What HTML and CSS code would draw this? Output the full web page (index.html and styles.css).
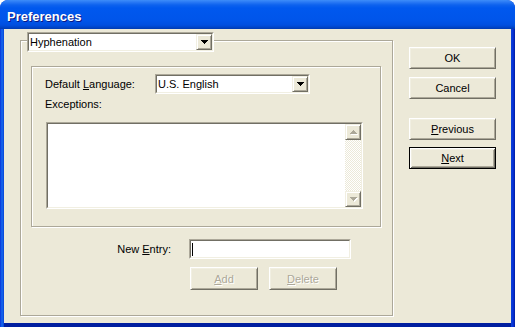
FILE: index.html
```html
<!DOCTYPE html>
<html lang="en">
<head>
  <meta charset="UTF-8">
  <title>Preferences</title>
  <link rel="stylesheet" href="styles.css">
</head>
<body>
  <div class="window">
    <div class="titlebar">Preferences</div>
    <div class="client">
      <div class="group">
        <div class="sunken combo combo-head">
          <div class="well">
            <span class="combo-text">Hyphenation</span>
            <span class="drop">
              <svg width="7" height="4" viewBox="0 0 7 4"><path d="M0 0h7v1H0zM1 1h5v1H1zM2 2h3v1H2zM3 3h1v1H3z" fill="#000"/></svg>
            </span>
          </div>
        </div>

        <div class="panel">
          <div class="lang-row">
            <label class="lang-label">Default <u>L</u>anguage:</label>
            <div class="sunken combo combo-lang">
              <div class="well">
                <span class="combo-text">U.S. English</span>
                <span class="drop">
                  <svg width="7" height="4" viewBox="0 0 7 4"><path d="M0 0h7v1H0zM1 1h5v1H1zM2 2h3v1H2zM3 3h1v1H3z" fill="#000"/></svg>
                </span>
              </div>
            </div>
          </div>
          <div class="exc-label">Exceptions:</div>
          <div class="sunken listbox">
            <div class="well">
              <div class="list-body"></div>
              <div class="scrollbar">
                <span class="sbtn">
                  <svg width="8" height="5" viewBox="0 0 8 5"><path d="M4 1h1v1H4zM3 2h3v1H3zM2 3h5v1H2zM1 4h7v1H1z" fill="#fff"/><path d="M3 0h1v1H3zM2 1h3v1H2zM1 2h5v1H1zM0 3h7v1H0z" fill="#ACA899"/></svg>
                </span>
                <span class="track"></span>
                <span class="sbtn">
                  <svg width="8" height="5" viewBox="0 0 8 5"><path d="M1 1h7v1H1zM2 2h5v1H2zM3 3h3v1H3zM4 4h1v1H4z" fill="#fff"/><path d="M0 0h7v1H0zM1 1h5v1H1zM2 2h3v1H2zM3 3h1v1H3z" fill="#ACA899"/></svg>
                </span>
              </div>
            </div>
          </div>
        </div>

        <div class="entry-row">
          <label class="entry-label">New <u>E</u>ntry:</label>
          <div class="sunken textbox">
            <div class="well"><span class="caret"></span></div>
          </div>
        </div>
        <div class="entry-buttons">
          <button class="btn small" disabled><u>A</u>dd</button>
          <button class="btn small" disabled><u>D</u>elete</button>
        </div>
      </div>

      <div class="side">
        <button class="btn">OK</button>
        <button class="btn">Cancel</button>
        <button class="btn gap-top"><u>P</u>revious</button>
        <button class="btn default"><u>N</u>ext</button>
      </div>
    </div>
  </div>
</body>
</html>
```

FILE: styles.css
```css
body {
  margin: 0;
  background: #fff;
  font-family: "Liberation Sans", Arial, sans-serif;
  font-size: 11px;
  color: #000;
}
.window {
  width: 515px;
  height: 327px;
  display: flex;
  flex-direction: column;
  background: linear-gradient(to right, #0831D9 0, #166AEE 2px, #0842D6 4px, #0842D6 511px, #0831D9 513px, #001EA0 515px);
  border-radius: 8px 8px 0 0;
  overflow: hidden;
}
.titlebar {
  height: 29px;
  box-sizing: border-box;
  flex: none;
  padding: 7px 0 0 7px;
  line-height: 20px;
  font-size: 13px;
  font-weight: bold;
  color: #fff;
  text-shadow: 1px 1px #0A1883;
  background: linear-gradient(to bottom, #3D8DF9 0, #2A7AF5 2px, #0D62EE 5px, #0058EE 8px, #0055EA 20px, #004FE0 25px, #0046CC 27px, #003BB0 29px);
}
.client {
  flex: 1;
  display: flex;
  margin: 0 4px 4px;
  padding: 11px 0 0 16px;
  background: #ECE9D8;
  box-shadow: 0 4px #001EA0;
}

/* etched frames */
.group {
  width: 373px;
  height: 276px;
  box-sizing: border-box;
  border: 1px solid #ACA899;
  box-shadow: inset 1px 1px #fff, 1px 1px #fff;
}
.panel {
  width: 350px;
  height: 161px;
  box-sizing: border-box;
  margin: 14px 0 0 10px;
  padding: 7px 0 0 13px;
  border: 1px solid #ACA899;
  box-shadow: inset 1px 1px #fff, 1px 1px #fff;
}

/* sunken 3d boxes */
.sunken {
  box-sizing: border-box;
  border: 1px solid;
  border-color: #ACA899 #fff #fff #ACA899;
}
.sunken > .well {
  height: 100%;
  box-sizing: border-box;
  border: 1px solid;
  border-color: #716F64 #F1EFE2 #F1EFE2 #716F64;
  background: #fff;
}

.combo .well {
  display: flex;
  align-items: center;
}
.combo-text {
  flex: 1;
  padding-left: 1px;
  line-height: 13px;
}
.drop {
  width: 16px;
  height: 16px;
  box-sizing: border-box;
  display: flex;
  align-items: center;
  justify-content: center;
  background: #ECE9D8;
  border: 1px solid;
  border-color: #F1EFE2 #716F64 #716F64 #F1EFE2;
  box-shadow: inset 1px 1px #fff, inset -1px -1px #ACA899;
}
.combo-head {
  width: 187px;
  height: 20px;
  margin: -9px 0 0 6px;
}
.combo-lang {
  width: 155px;
  height: 20px;
}

.lang-row {
  display: flex;
  align-items: center;
}
.lang-label {
  width: 110px;
  line-height: 13px;
}
.exc-label {
  margin-top: 4px;
  line-height: 13px;
}

.listbox {
  width: 317px;
  height: 87px;
  margin: 11px 0 0 1px;
}
.listbox .well {
  display: flex;
}
.list-body {
  flex: 1;
}
.scrollbar {
  width: 16px;
  display: flex;
  flex-direction: column;
}
.sbtn {
  width: 16px;
  height: 16px;
  box-sizing: border-box;
  display: flex;
  align-items: center;
  justify-content: center;
  padding-left: 1px;
  background: #ECE9D8;
  border: 1px solid;
  border-color: #F1EFE2 #716F64 #716F64 #F1EFE2;
  box-shadow: inset 1px 1px #fff, inset -1px -1px #ACA899;
}
.track {
  flex: 1;
  background: repeating-conic-gradient(#ECE9D8 0 25%, #fff 0 50%) 0 0 / 2px 2px;
}

.entry-row {
  display: flex;
  align-items: center;
  margin-top: 12px;
}
.entry-label {
  width: 150px;
  text-align: right;
  margin-right: 18px;
  line-height: 13px;
}
.textbox {
  width: 162px;
  height: 20px;
}
.textbox .well {
  padding: 2px 0 0 1px;
}
.caret {
  display: block;
  width: 1px;
  height: 13px;
  background: #000;
}
.entry-buttons {
  display: flex;
  gap: 11px;
  margin: 8px 0 0 169px;
}

/* push buttons */
.btn {
  display: block;
  width: 87px;
  height: 22px;
  padding: 0;
  font-family: inherit;
  font-size: 11px;
  color: #000;
  background: #ECE9D8;
  border: 1px solid;
  border-color: #fff #716F64 #716F64 #fff;
  box-shadow: inset 1px 1px #F1EFE2, inset -1px -1px #ACA899;
}
.btn.small {
  width: 68px;
  height: 23px;
}
.btn:disabled {
  color: #ACA899;
  text-shadow: 1px 1px #fff;
}
.btn.default {
  border-color: #000;
  box-shadow: inset 1px 1px #fff, inset -1px -1px #716F64, inset 2px 2px #F1EFE2, inset -2px -2px #ACA899;
}
.side {
  display: flex;
  flex-direction: column;
  gap: 8px;
  margin: 7px 0 0 16px;
}
.side .gap-top {
  margin-top: 11px;
}
.side .default {
  margin-top: -1px;
}
```
